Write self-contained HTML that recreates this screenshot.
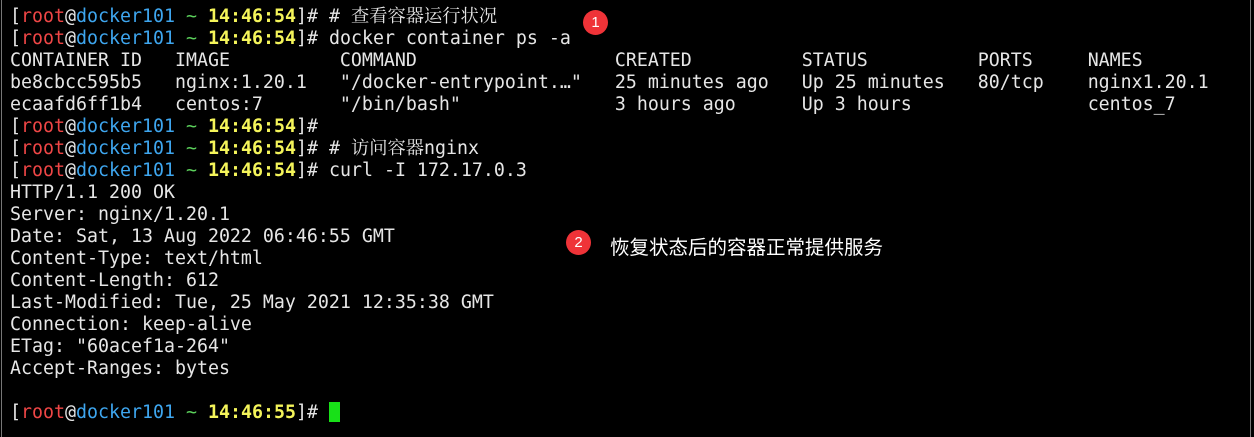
<!DOCTYPE html>
<html><head><meta charset="utf-8"><style>
body{margin:0;width:1254px;height:437px;background:#000;overflow:hidden;position:relative}
.t{position:absolute;left:10px;top:6px;font-family:"DejaVu Sans Mono","Noto Serif CJK SC",monospace;font-size:18.27px;line-height:22px;color:#e6e6e6;white-space:pre}
.r{color:#ef4646}.b{color:#3ea6ef}.g{color:#5bd05b}.y{color:#f4f45a;font-weight:bold}
.cur{display:inline-block;width:11px;height:20px;background:#18e018;vertical-align:-4px}
.c{position:absolute;width:25px;height:25px;border-radius:50%;background:#ef3338;color:#fff;font:15px "Liberation Sans",sans-serif;text-align:center;line-height:25px}
.note{position:absolute;left:610px;top:231px;color:#fff;font:19.5px "Liberation Sans","Noto Sans CJK SC",sans-serif}
.bl{position:absolute;top:0;bottom:0;width:1px;background:#777}
</style></head><body>
<div class="bl" style="left:1px"></div><div class="bl" style="right:3px"></div>
<div class="t">[<span class="r">root</span>@<span class="b">docker101</span> <span class="g">~</span> <span class="y">14:46:54</span>]# # 查看容器运行状况
[<span class="r">root</span>@<span class="b">docker101</span> <span class="g">~</span> <span class="y">14:46:54</span>]# docker container ps -a
CONTAINER ID   IMAGE          COMMAND                  CREATED          STATUS          PORTS     NAMES
be8cbcc595b5   nginx:1.20.1   "/docker-entrypoint.…"   25 minutes ago   Up 25 minutes   80/tcp    nginx1.20.1
ecaafd6ff1b4   centos:7       "/bin/bash"              3 hours ago      Up 3 hours                centos_7
[<span class="r">root</span>@<span class="b">docker101</span> <span class="g">~</span> <span class="y">14:46:54</span>]#
[<span class="r">root</span>@<span class="b">docker101</span> <span class="g">~</span> <span class="y">14:46:54</span>]# # 访问容器nginx
[<span class="r">root</span>@<span class="b">docker101</span> <span class="g">~</span> <span class="y">14:46:54</span>]# curl -I 172.17.0.3
HTTP/1.1 200 OK
Server: nginx/1.20.1
Date: Sat, 13 Aug 2022 06:46:55 GMT
Content-Type: text/html
Content-Length: 612
Last-Modified: Tue, 25 May 2021 12:35:38 GMT
Connection: keep-alive
ETag: "60acef1a-264"
Accept-Ranges: bytes

[<span class="r">root</span>@<span class="b">docker101</span> <span class="g">~</span> <span class="y">14:46:55</span>]# <span class="cur"></span></div>
<div class="c" style="left:583px;top:10px">1</div>
<div class="c" style="left:566px;top:230px">2</div>
<div class="note">恢复状态后的容器正常提供服务</div>
</body></html>
